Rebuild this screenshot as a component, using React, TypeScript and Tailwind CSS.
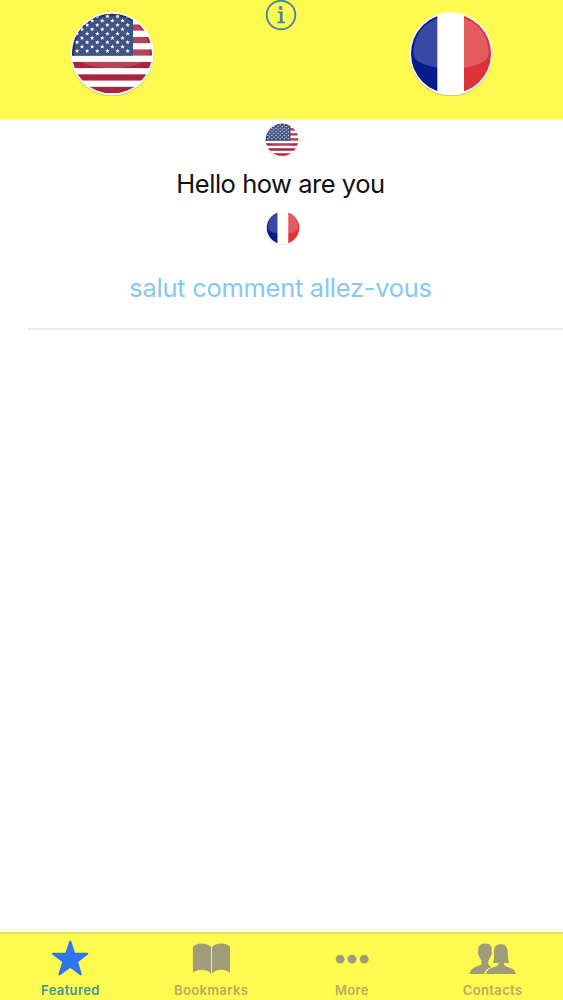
import type { ReactNode } from 'react';

const starRows = [0, 1, 2, 3, 4, 5, 6, 7, 8];
const redStripes = [0, 2, 4, 6, 8, 10, 12];

function UsFlag({ className }: { className: string }) {
  return (
    <svg className={className} viewBox="0 0 252 252">
      <defs>
        <clipPath id="us-circle">
          <circle cx="126" cy="125" r="120" />
        </clipPath>
      </defs>
      <circle cx="126" cy="128" r="125" fill="#8a8a60" opacity="0.45" />
      <circle cx="126" cy="125" r="125" fill="#fff" />
      <g clipPath="url(#us-circle)">
        {redStripes.map((i) => (
          <rect key={i} x="0" y={i * 18.7} width="252" height="18.7" fill="#a9253f" />
        ))}
        <rect x="0" y="0" width="189" height="131" fill="#20356f" />
        <path d="M13 126C13 -26 239 -26 239 126C232 182 20 182 13 126Z" fill="#fff" opacity="0.15" />
        {starRows.map((row) =>
          [0, 1, 2, 3, 4, 5].map((col) => {
            const x = 21 + col * 30.4 + (row % 2 ? 15 : 0);
            const y = 117 - row * 13;
            if (x > 180) return null;
            return (
              <path
                key={`${row}-${col}`}
                transform={`translate(${x} ${y})`}
                d="M0-7 1.8-2.3 6.7-2.2 2.9 1 4.1 5.7 0 3-4.1 5.7-2.9 1-6.7-2.2-1.8-2.3Z"
                fill="#fff"
              />
            );
          })
        )}
      </g>
    </svg>
  );
}

function FrFlag({ className }: { className: string }) {
  return (
    <svg className={className} viewBox="0 0 252 252">
      <defs>
        <clipPath id="fr-circle">
          <circle cx="126" cy="125" r="120" />
        </clipPath>
      </defs>
      <circle cx="126" cy="128" r="125" fill="#8a8a60" opacity="0.45" />
      <circle cx="126" cy="125" r="125" fill="#fff" />
      <g clipPath="url(#fr-circle)">
        <rect x="0" y="0" width="85" height="252" fill="#081b8b" />
        <rect x="165" y="0" width="87" height="252" fill="#dc3238" />
        <path d="M13 126C13 -26 239 -26 239 126C232 184 20 184 13 126Z" fill="#fff" opacity="0.2" />
      </g>
    </svg>
  );
}

function InfoIcon() {
  return (
    <svg className="w-8 h-8" viewBox="0 0 32 32" fill="none">
      <circle cx="16" cy="16" r="14.3" stroke="#4b85a4" strokeWidth="1.9" />
      <circle cx="15.7" cy="9" r="1.9" fill="#4b85a4" />
      <path d="M12.6 13.3H16.7V23.4M12.4 23.4H20" stroke="#4b85a4" strokeWidth="1.6" />
      <path d="M16.1 13V23.4" stroke="#4b85a4" strokeWidth="2.4" />
    </svg>
  );
}

function StarIcon() {
  return (
    <svg className="w-12 h-10" viewBox="0 0 48 40">
      <path
        d="M24.3 2.6 28.3 14.8H41.3L31 22.6 34.8 35.4 24.3 27.8 13.4 35.4 17.4 22.6 7 14.8H20.1Z"
        fill="#2f76ee"
        stroke="#2f76ee"
        strokeWidth="2"
        strokeLinejoin="round"
      />
    </svg>
  );
}

function BookIcon() {
  return (
    <svg className="w-12 h-10" viewBox="0 0 48 40" fill="#a09c78">
      <path d="M5.9 8C8.5 3.2 21 3.2 24 8.2V35C21 29.8 11.5 29.2 5.9 33.6Z" />
      <path d="M24.9 8.2C28 3.2 40.5 3.2 43 8V33.6C37.5 29.2 28 29.8 24.9 35Z" />
    </svg>
  );
}

function MoreIcon() {
  return (
    <svg className="w-12 h-10" viewBox="0 0 48 40" fill="#a09c78">
      <circle cx="12.2" cy="20.2" r="4.4" />
      <circle cx="24" cy="20.2" r="4.4" />
      <circle cx="36.2" cy="20.2" r="4.4" />
    </svg>
  );
}

function ContactsIcon() {
  return (
    <svg className="w-12 h-10" viewBox="0 0 48 40" fill="#a09c78">
      <path d="M16 4.6C10.3 4.6 8.8 7.8 9.4 12.8C8.5 13.3 9 16.6 10.4 17.2C10.8 19.4 11.8 20.8 12.5 21.8V25C10.5 27.8 2 27 .4 35H15C16 31.5 19 29 22.7 27.8C20.5 27 19.5 26.2 19.2 25V21.8C20.2 20.6 21.2 19.2 21.5 17.2C22.9 16.4 23.2 13.4 22.5 12.8C23.4 7.9 22 4.6 16 4.6Z" />
      <path d="M32 5.3C25.7 5 24.8 9.5 25 14.5C25.1 18.5 25 21.2 24 23.4C25.4 24 27 24 29.2 23.8V26C26 28.8 18.2 28.3 17 35H47C45.5 28.3 37.5 28.7 35 26V23.8C37 24 39 24 40.2 23.4C38.8 20.5 38.9 17.5 38.8 14C38.7 8.5 36.5 5 32 5.3Z" />
    </svg>
  );
}

interface TabProps {
  label: string;
  labelClass: string;
  children: ReactNode;
}

function Tab({ label, labelClass, children }: TabProps) {
  return (
    <div className="flex flex-1 flex-col items-center pt-[5px]">
      {children}
      <span className={`mt-[3px] text-[13px] leading-4 font-semibold tracking-[0.35px] whitespace-nowrap ${labelClass}`}>
        {label}
      </span>
    </div>
  );
}

export default function App() {
  return (
    <div className="flex h-[1000px] w-[563px] flex-col overflow-hidden bg-white font-['Inter',sans-serif]">
      <header className="flex h-[120px] shrink-0 items-start justify-between border-b border-[#ffffb0] bg-[#fffa50] pr-[70px] pl-[70px]">
        <UsFlag className="mt-3 h-[84px] w-[84px]" />
        <div className="-mt-px -ml-[1px]">
          <InfoIcon />
        </div>
        <FrFlag className="mt-3 h-[84px] w-[84px]" />
      </header>

      <main className="flex flex-1 flex-col">
        <div className="ml-7 flex h-[210px] flex-col items-center border-b-2 border-[#ececee] pr-7">
          <UsFlag className="mt-[3px] h-[34px] w-[34px]" />
          <p className="mt-[11px] -ml-0.5 text-[25.5px] leading-8 tracking-[-0.47px] whitespace-nowrap text-[#111]">
            Hello how are you
          </p>
          <FrFlag className="mt-[11px] ml-[3px] h-[34px] w-[34px]" />
          <p className="mt-[27px] -ml-0.5 text-[25.5px] leading-8 tracking-[-0.28px] whitespace-nowrap text-[#87c8ee]">
            salut comment allez-vous
          </p>
        </div>
      </main>

      <nav className="flex h-[68px] shrink-0 border-t-2 border-[#dfdc78] bg-[#fffa50]">
        <Tab label="Featured" labelClass="text-[#469694]">
          <StarIcon />
        </Tab>
        <Tab label="Bookmarks" labelClass="text-[#b5ad62]">
          <BookIcon />
        </Tab>
        <Tab label="More" labelClass="text-[#b5ad62]">
          <MoreIcon />
        </Tab>
        <Tab label="Contacts" labelClass="text-[#b5ad62]">
          <ContactsIcon />
        </Tab>
      </nav>
    </div>
  );
}
